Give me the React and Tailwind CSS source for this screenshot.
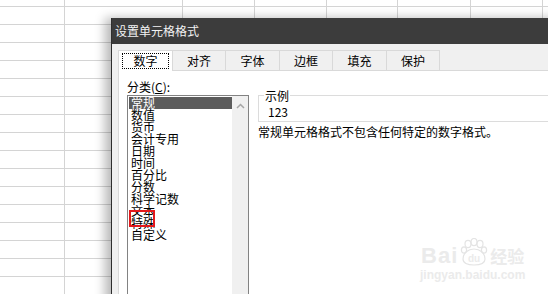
const font = { fontFamily: '"Noto Sans CJK SC", "Liberation Sans", sans-serif' };

const colWidths = [65, 118, 72, 72, 71, 73, 72, 40];

const tabs = [
  { label: "数字", w: "w-[55px]", active: true },
  { label: "对齐", w: "w-[53px]" },
  { label: "字体", w: "w-[54px]" },
  { label: "边框", w: "w-[53px]" },
  { label: "填充", w: "w-[54px]" },
  { label: "保护", w: "w-[53px]" },
];

const categories = [
  "常规",
  "数值",
  "货币",
  "会计专用",
  "日期",
  "时间",
  "百分比",
  "分数",
  "科学记数",
  "文本",
  "特殊",
  "自定义",
];

function Sheet() {
  const rows = Array.from({ length: 16 });
  return (
    <>
      <div className="flex flex-col">
        <div className="h-[7px] border-b border-[#d4d4d4]" />
        {rows.map((_, i) => (
          <div key={i} className="h-[18px] shrink-0 border-b border-[#d4d4d4]" />
        ))}
      </div>
      <div className="absolute inset-0 flex">
        {colWidths.map((w, i) => (
          <div
            key={i}
            className="h-full shrink-0 border-r border-[#d4d4d4]"
            style={{ width: w }}
          />
        ))}
      </div>
    </>
  );
}

function Watermark() {
  return (
    <div className="absolute left-[420px] top-[238px] flex flex-col items-center text-[#ebebeb]">
      <div className="flex items-end">
        <span className="text-[22px] font-bold leading-[20px] tracking-[1px]" style={{ fontFamily: '"Liberation Sans", sans-serif' }}>
          Bai
        </span>
        <svg width="30" height="28" viewBox="0 0 30 28" className="mx-[1px]">
          <g fill="none" stroke="#e4e4e4" strokeWidth="1.2">
            <ellipse cx="9" cy="6" rx="3" ry="3.6" />
            <ellipse cx="15" cy="4" rx="3" ry="3.6" />
            <ellipse cx="21" cy="6" rx="3" ry="3.6" />
            <ellipse cx="5" cy="12" rx="2.6" ry="3.2" />
            <ellipse cx="25" cy="12" rx="2.6" ry="3.2" />
            <path d="M4 21c0-6 5-10 11-10s11 4 11 10c0 4-4 6-11 6S4 25 4 21z" />
          </g>
          <text x="15" y="24" textAnchor="middle" fontSize="10" fontWeight="bold" fill="#ebebeb" fontFamily="Liberation Sans, sans-serif">
            du
          </text>
        </svg>
        <span className="text-[17px] font-bold leading-[20px]" style={font}>
          经验
        </span>
      </div>
      <span className="mt-[3px] text-[12px] font-bold leading-[12px]" style={{ fontFamily: '"Liberation Sans", sans-serif' }}>
        jingyan.baidu.com
      </span>
    </div>
  );
}

export default function App() {
  return (
    <div className="relative w-[548px] h-[294px] overflow-hidden bg-white" style={font}>
      <Sheet />

      {/* format cells dialog */}
      <div className="absolute left-[111px] top-[18px] w-[460px] h-[300px] flex flex-col border-l border-[#2e2e2e] bg-[#f0f0f0] shadow-[-6px_0_10px_rgba(0,0,0,0.28)]">
        <div className="h-[26px] shrink-0 bg-[#3c3c3c] pl-[3px] flex items-center text-[12px] text-[#f2f2f2]">
          设置单元格格式
        </div>

        <div className="mt-[6px] ml-[6px] flex flex-col flex-1">
          {/* tabs */}
          <div className="flex h-[20px]">
            {tabs.map((t) => (
              <div
                key={t.label}
                className={`${t.w} h-[21px] shrink-0 flex items-center justify-center text-[12px] text-black border border-[#d9d9d9] ${
                  t.active ? "bg-white border-b-0 relative z-10" : "bg-[#f0f0f0] border-l-0"
                }`}
              >
                {t.active ? (
                  <span className="px-[10px] border border-dotted border-black leading-[14px]">{t.label}</span>
                ) : (
                  t.label
                )}
              </div>
            ))}
          </div>

          {/* tab page */}
          <div className="flex-1 bg-white border-t border-l border-[#d9d9d9] flex pl-[8px]">
            <div className="flex flex-col w-[122px] shrink-0">
              <div className="mt-[9px] h-[14px] text-[12px] leading-[14px] text-black">
                分类(<span className="underline">C</span>):
              </div>
              <div className="mt-[1px] flex-1 flex border border-[#828282] bg-white">
                <div className="relative flex-1 pl-[1px] pt-[1px] flex flex-col">
                  {categories.map((c, i) => (
                    <div
                      key={c}
                      className={`h-[12px] shrink-0 pl-[2px] text-[12px] leading-[12px] whitespace-nowrap ${
                        i === 0 ? "bg-[#5c5c5c] text-white" : "text-black"
                      }`}
                    >
                      {c}
                    </div>
                  ))}
                  <div className="absolute left-[1px] top-[114px] w-[26px] h-[17px] border-2 border-[#e3191c]" />
                </div>
                <div className="w-[16px] shrink-0 bg-[#f0f0f0] flex justify-center pt-[7px]">
                  <svg width="9" height="6" viewBox="0 0 9 6">
                    <path d="M1 5 L4.5 1.5 L8 5" fill="none" stroke="#a6a6a6" strokeWidth="1.5" />
                  </svg>
                </div>
              </div>
            </div>

            <div className="ml-[9px] flex flex-col flex-1">
              <div className="mt-[24px] h-[27px] relative border border-[#dcdcdc] border-r-0 pl-[9px] pt-[10px] text-[12px] leading-[12px] text-black">
                <span className="absolute left-[5px] top-[-7px] bg-white px-[1px] text-[12px] leading-[13px]">示例</span>
                123
              </div>
              <div className="mt-[3px] text-[12px] leading-[13px] text-black whitespace-nowrap">
                常规单元格格式不包含任何特定的数字格式。
              </div>
            </div>
          </div>
        </div>
      </div>

      <Watermark />
    </div>
  );
}
